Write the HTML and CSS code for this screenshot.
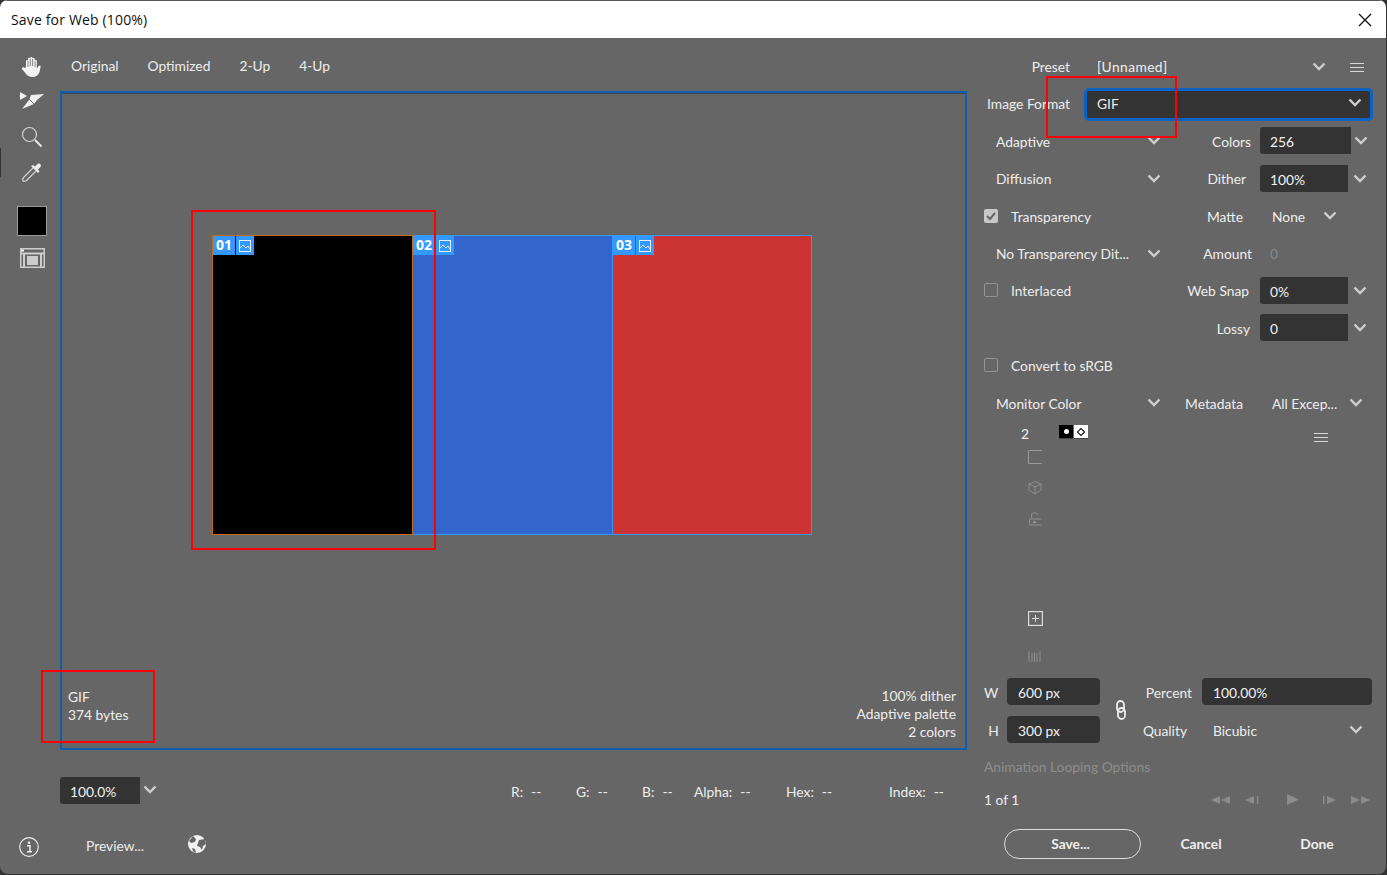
FILE: index.html
```html
<!DOCTYPE html>
<html lang="en">
<head>
<meta charset="utf-8">
<title>Save for Web (100%)</title>
<link rel="stylesheet" href="styles.css">
</head>
<body>
<svg class="defs" width="0" height="0" aria-hidden="true">
  <symbol id="chev" viewBox="0 0 14 9"><path d="M1.5 1.5 7 7l5.5-5.5" fill="none" stroke="#cfcfcf" stroke-width="2.4"/></symbol>
  <symbol id="menu" viewBox="0 0 16 11"><path d="M1 1.5h14M1 5.500h14M1 9.500h14" fill="none" stroke="#d8d8d8" stroke-width="1.2"/></symbol>
  <symbol id="pic" viewBox="0 0 12 12"><rect x=".5" y=".5" width="11" height="11" fill="none" stroke="#e8f2ff"/><path d="M1 8l3-3 3 3 2-2 2 3" fill="none" stroke="#e8f2ff"/></symbol>
</svg>
<div class="window">
  <header class="titlebar">
    <span class="title">Save for Web (100%)</span>
    <svg class="close" width="14" height="14" viewBox="0 0 14 14"><path d="M1 1l12 12M13 1 1 13" stroke="#111" stroke-width="1.3"/></svg>
  </header>
  <div class="content">
    <section class="left-pane">
      <div class="workspace">
        <nav class="tools">
          <div class="tool">
            <svg class="hand" width="24" height="24" viewBox="0 0 24 24"><path d="M6 12.500V6.200c0-1.600 2-1.600 2 0V4c0-1.700 2.200-1.700 2.300 0v-.8c0-1.600 2.300-1.600 2.300 0v1.100c0-1.600 2.200-1.600 2.200 0V6c0-1.500 2.100-1.500 2.100 0l-.2 7.500 2-2.400c1-1.200 2.700-.2 1.800 1.200L19.500 17c-1.400 3.300-3.400 5-7 5-3.500 0-5.200-1.300-6.800-3.500L2.300 14.400c-1-1.400.7-2.700 2-1.700Z" fill="#f4f4f4"/><path d="M8 6v6M10.300 4v7M12.600 4v7M15 6v6" stroke="#666" stroke-width=".8"/></svg>
          </div>
          <div class="tool">
            <svg width="24" height="20" viewBox="0 0 24 20"><path d="M0 1v8l7-4Z" fill="#f0f0f0"/><path d="M24 3 11 4l-2 5-7 9 12-5 3-4Z" fill="#f0f0f0"/><path d="M9 8l5 5" stroke="#666"/></svg>
          </div>
          <div class="tool">
            <svg width="22" height="22" viewBox="0 0 22 22"><circle cx="8.500" cy="8.500" r="7" fill="none" stroke="#d4d4d4" stroke-width="1.200"/><path d="M14 14l6.500 6.500" stroke="#e8e8e8" stroke-width="2"/></svg>
          </div>
          <div class="tool">
            <svg width="22" height="22" viewBox="0 0 22 22"><path d="M12 7 3 16c-1 1-1.500 3-1 4s3 0 4-1l9-9" fill="none" stroke="#cfcfcf" stroke-width="1.300"/><path d="M10 5l7 7 1.500-1.500-1.500-2 2.500-2.500c1.500-2-1-4.500-3-3l-2.500 2.500-2-1.500Z" fill="#ececec"/></svg>
          </div>
          <div class="swatch"></div>
          <div class="slices-toggle">
            <svg width="25" height="20" viewBox="0 0 25 20"><path d="M.75.750h23.500v18.500H.750Z" fill="none" stroke="#cdcdcd" stroke-width="1.500"/><path d="M1 5.500h23" stroke="#cdcdcd" stroke-width="2"/><path d="M4 6v13M21 6v13" stroke="#cdcdcd" stroke-width="2"/><path d="M7 8h11v9H7Z" fill="#cdcdcd"/><path d="M1 2.500h3" stroke="#f2f2f2" stroke-width="2"/></svg>
          </div>
        </nav>
        <main class="center">
          <div class="tabs">
            <span class="tab">Original</span>
            <span class="tab">Optimized</span>
            <span class="tab">2-Up</span>
            <span class="tab">4-Up</span>
          </div>
          <div class="canvas">
            <div class="image">
              <div class="slice s-black"><div class="tags"><b class="tag-num">01</b><span class="tag-ico"><svg width="12" height="12"><use href="#pic"/></svg></span></div></div>
              <div class="slice s-blue"><div class="tags"><b class="tag-num">02</b><span class="tag-ico"><svg width="12" height="12"><use href="#pic"/></svg></span></div></div>
              <div class="slice s-red"><div class="tags"><b class="tag-num">03</b><span class="tag-ico"><svg width="12" height="12"><use href="#pic"/></svg></span></div></div>
            </div>
            <div class="canvas-info">
              <div class="info-left">GIF<br>374 bytes</div>
              <div class="info-right">100% dither<br>Adaptive palette<br>2 colors</div>
            </div>
          </div>
        </main>
      </div>
      <div class="statusbar">
        <div class="field zoom-field">100.0%</div>
        <svg class="chev zoom-chev"><use href="#chev"/></svg>
        <div class="readouts">
          <span class="rd"><span>R:</span><span>--</span></span>
          <span class="rd"><span>G:</span><span>--</span></span>
          <span class="rd"><span>B:</span><span>--</span></span>
          <span class="rd"><span>Alpha:</span><span>--</span></span>
          <span class="rd"><span>Hex:</span><span>--</span></span>
          <span class="rd"><span>Index:</span><span>--</span></span>
        </div>
      </div>
      <footer class="foot-left">
        <svg class="info-ico" width="20" height="20" viewBox="0 0 20 20"><circle cx="10" cy="10" r="9.300" fill="none" stroke="#eee" stroke-width="1.200"/><circle cx="10" cy="5.700" r="1.300" fill="#eee"/><path d="M8 8.700h3v6M8 14.800h5" fill="none" stroke="#eee" stroke-width="1.500"/></svg>
        <span class="preview">Preview...</span>
        <svg class="globe" width="18" height="18" viewBox="0 0 18 18"><circle cx="9" cy="9" r="9" fill="#f2f2f2"/><path d="M5 1 8 4 7 7 3 8 1 6ZM11 5l6-1 1 5-3 2-1 4-2-3-3-1 1-3ZM4 13l3 1 1 4-3-2Z" fill="#666"/></svg>
      </footer>
    </section>

    <aside class="panel">
      <div class="row preset-row">
        <span class="cap">Preset</span>
        <span class="preset-val">[Unnamed]</span>
        <svg class="chev preset-chev"><use href="#chev"/></svg>
        <svg class="menu-ico"><use href="#menu"/></svg>
      </div>
      <div class="row format-row">
        <span class="cap">Image Format</span>
        <div class="format-select"><span>GIF</span><svg class="chev"><use href="#chev"/></svg></div>
      </div>
      <div class="row set">
        <div class="sel"><span>Adaptive</span><svg class="chev"><use href="#chev"/></svg></div>
        <span class="lbl">Colors</span>
        <div class="field f-wide">256</div><svg class="chev"><use href="#chev"/></svg>
      </div>
      <div class="row set">
        <div class="sel"><span>Diffusion</span><svg class="chev"><use href="#chev"/></svg></div>
        <span class="lbl e5">Dither</span>
        <div class="field">100%</div><svg class="chev"><use href="#chev"/></svg>
      </div>
      <div class="row set">
        <label class="chk"><span class="box on"><svg width="14" height="14" viewBox="0 0 14 14"><path d="M3 7l3 3 5-6" fill="none" stroke="#666" stroke-width="2"/></svg></span>Transparency</label>
        <span class="lbl e8">Matte</span>
        <div class="plain matte">None</div><svg class="chev"><use href="#chev"/></svg>
      </div>
      <div class="row set">
        <div class="sel"><span>No Transparency Dit...</span><svg class="chev"><use href="#chev"/></svg></div>
        <span class="lbl en1">Amount</span>
        <div class="plain dim">0</div>
      </div>
      <div class="row set">
        <label class="chk"><span class="box"></span>Interlaced</label>
        <span class="lbl e2">Web Snap</span>
        <div class="field">0%</div><svg class="chev"><use href="#chev"/></svg>
      </div>
      <div class="row set">
        <div class="sel empty"></div>
        <span class="lbl e1">Lossy</span>
        <div class="field">0</div><svg class="chev"><use href="#chev"/></svg>
      </div>
      <div class="row set">
        <label class="chk"><span class="box"></span>Convert to sRGB</label>
      </div>
      <div class="row set">
        <div class="sel"><span>Monitor Color</span><svg class="chev"><use href="#chev"/></svg></div>
        <span class="lbl e8">Metadata</span>
        <div class="plain meta">All Excep...</div><svg class="chev"><use href="#chev"/></svg>
      </div>

      <div class="palette">
        <div class="palette-head">
          <span class="count">2</span>
          <span class="chip c-black"><i></i></span><span class="chip c-white"><i></i></span>
          <svg class="menu-ico pal-menu"><use href="#menu"/></svg>
        </div>
        <div class="pal-tools">
          <svg width="14" height="14" viewBox="0 0 14 14"><path d="M14 .5H.5v13H14" fill="none" stroke="#999"/></svg>
          <svg width="14" height="14" viewBox="0 0 14 14"><path d="M7 .5 13 3v6l-6 4-6-4V3ZM1 3l6 3 6-3M7 6v7" fill="none" stroke="#8f8f8f"/></svg>
          <svg width="14" height="14" viewBox="0 0 14 14"><path d="M1.500 7h12M1.500 7v6h12M3.500 6V3c0-3 6-3 6 0" fill="none" stroke="#8f8f8f"/><path d="M6.500 8.500 8.500 11h-4Z" fill="#9a9a9a"/></svg>
          <svg class="pal-add" width="15" height="15" viewBox="0 0 15 15"><rect x=".6" y=".6" width="13.800" height="13.800" fill="none" stroke="#ddd" stroke-width="1.200"/><path d="M4 7.500h7M7.500 4v7" stroke="#ddd"/></svg>
          <svg class="pal-del" width="13" height="13" viewBox="0 0 13 13"><path d="M1 1v11M12 1v11M4 3v9M6.500 2v10M9 3v9" stroke="#8f8f8f"/></svg>
        </div>
      </div>

      <div class="size-grid">
        <span class="s-lbl w">W</span><div class="field s-field">600 px</div>
        <svg class="link" width="10" height="20" viewBox="0 0 10 20"><rect x="1" y="1" width="7" height="11" rx="3.500" fill="none" stroke="#eee" stroke-width="1.800"/><rect x="2" y="8" width="7" height="11" rx="3.500" fill="none" stroke="#eee" stroke-width="1.800"/></svg>
        <span class="s-cap">Percent</span><div class="field pct">100.00%</div>
        <span class="s-lbl h">H</span><div class="field s-field">300 px</div>
        <span class="s-cap q">Quality</span>
        <div class="quality"><span>Bicubic</span><svg class="chev"><use href="#chev"/></svg></div>
      </div>
      <div class="anim-title">Animation Looping Options</div>
      <div class="anim-row">
        <span>1 of 1</span>
        <div class="player">
          <svg width="20" height="8" viewBox="0 0 20 8"><path d="M9 0v8L0 4ZM19 0v8l-9-4Z" fill="#8c8c8c"/></svg>
          <svg width="14" height="8" viewBox="0 0 14 8"><path d="M9 0v8L0 4Z" fill="#8c8c8c"/><path d="M12 0h1.500v8H12Z" fill="#8c8c8c"/></svg>
          <svg class="pl-play" width="12" height="11" viewBox="0 0 12 11"><path d="M0 0v11l12-5.500Z" fill="#8c8c8c"/></svg>
          <svg width="14" height="8" viewBox="0 0 14 8"><path d="M0 0h1.500v8H0ZM4 0v8l9-4Z" fill="#8c8c8c"/></svg>
          <svg width="20" height="8" viewBox="0 0 20 8"><path d="M0 0v8l9-4ZM10 0v8l9-4Z" fill="#8c8c8c"/></svg>
        </div>
      </div>
      <div class="actions">
        <button class="btn save">Save...</button>
        <button class="btn cancel">Cancel</button>
        <button class="btn done">Done</button>
      </div>
    </aside>
  </div>
  <div class="mark m-format"></div>
  <div class="mark m-slice"></div>
  <div class="mark m-info"></div>
</div>
</body>
</html>
```

FILE: styles.css
```css
* { box-sizing: border-box; }
html, body { margin: 0; height: 100%; background: #333; overflow: hidden; }
body { font: 13.8px/18px Lato, "Noto Sans", sans-serif; color: #eee; }
.defs { position: absolute; }
svg { display: block; flex: none; }
.chev { width: 14px; height: 9px; margin-top: -2px; }
.menu-ico { width: 16px; height: 11px; }

.window { position: relative; width: 1387px; height: 874px; background: #666; display: flex; flex-direction: column; border-radius: 8px; overflow: hidden; border-right: 1px solid #333; }
.titlebar { height: 38px; flex: none; background: #fff; display: flex; align-items: center; justify-content: space-between; padding: 0 14px 0 11px; border-top: 1px solid #555; }
.title { font: 14px/18px "Open Sans", sans-serif; color: #111; letter-spacing: .16px; }
.content { flex: 1; display: flex; min-height: 0; }

.left-pane { width: 970px; flex: none; display: flex; flex-direction: column; }
.workspace { display: flex; }
.tools { width: 60px; flex: none; display: flex; flex-direction: column; align-items: center; padding: 10px 0 0 4px; position: relative; }
.tools::after { content: ""; position: absolute; left: 0; top: 110px; width: 1px; height: 29px; background: #333; }
.tool { height: 35.500px; width: 100%; display: flex; align-items: center; justify-content: center; }
.hand { margin-top: 2px; }
.swatch { width: 30px; height: 30px; background: #000; border: 1px solid #9a9a9a; margin-top: 16px; }
.slices-toggle { margin-top: 12px; }

.center { width: 907px; }
.tabs { height: 53px; display: flex; align-items: center; padding: 3px 0 0 11px; gap: 29px; }
.tab { white-space: nowrap; }
.canvas { height: 659px; border: 2px solid #0f5fb0; box-shadow: inset 0 1px #4a4a4a; display: flex; flex-direction: column; padding: 142px 9px 7px 6px; }
.image { display: flex; height: 300px; margin-left: 144px; }
.slice { height: 300px; border: 1px solid #39f; }
.tags { display: flex; gap: 1px; height: 19px; }
.tag-num { width: 22px; background: #39f; color: #fff; font: 700 14px/18px "Open Sans", sans-serif; text-align: center; }
.tag-ico { width: 18px; background: #39f; display: flex; align-items: center; justify-content: center; }
.s-black { width: 201px; background: #000; border-color: #c46a12; }
.s-blue { width: 199px; background: #36c; border-left: 0; border-right: 0; }
.s-red { width: 200px; background: #c33; }
.canvas-info { margin-top: auto; display: flex; justify-content: space-between; align-items: flex-end; }
.info-left { margin-bottom: 17px; }
.info-right { text-align: right; }

.statusbar { display: flex; align-items: center; height: 27px; margin-top: 27px; padding-left: 60px; }
.field { background: #333; height: 27px; width: 88px; border-radius: 3px 0 0 3px; padding: 6px 0 0 10px; flex: none; color: #f2f2f2; }
.zoom-field { width: 80px; }
.zoom-chev { margin-left: 3px; }
.readouts { display: grid; grid-template-columns: 65px 66px 52px 92px 103px auto; margin-left: 354px; padding-top: 3px; }
.rd { display: flex; gap: 8px; white-space: nowrap; }
.foot-left { display: flex; align-items: center; padding: 0 0 0 19px; margin-top: 27px; height: 30px; }
.info-ico { margin-top: 2px; }
.preview { margin-left: 47px; }
.globe { margin: -5px 0 0 44px; }

.panel { width: 416px; flex: none; padding: 10.400px 0 0 14px; display: flex; flex-direction: column; }
.row { height: 37.400px; flex: none; display: flex; align-items: center; white-space: nowrap; }
.preset-row .cap, .format-row .cap { width: 86px; text-align: right; }
.preset-val { margin-left: 27px; width: 215px; letter-spacing: .4px; }
.preset-chev { margin-right: 23px; }
.format-select { margin-left: 14px; width: 289px; height: 33px; background: #333; border: 3px solid #0a62c2; border-radius: 5px; display: flex; align-items: center; justify-content: space-between; padding: 0 8px 0 10px; }
.format-select .chev { margin-top: -4px; }
.sel { width: 180px; padding: 0 3px 0 12px; display: flex; align-items: center; justify-content: space-between; flex: none; }
.lbl { width: 87px; flex: none; text-align: right; margin-right: 9px; }
.lbl.e5 { width: 82px; margin-right: 14px; }
.lbl.e8 { width: 79px; margin-right: 17px; }
.lbl.e2 { width: 85px; margin-right: 11px; }
.lbl.e1 { width: 86px; margin-right: 10px; }
.lbl.en1 { width: 88px; margin-right: 8px; }
.set .field { margin-top: -2px; }
.set .field + .chev { margin-left: 5px; }
.set .f-wide { width: 91px; }
.set .f-wide + .chev { margin-left: 3px; }
.plain { padding-left: 12px; flex: none; }
.matte { width: 63px; }
.meta { width: 89px; }
.dim { color: #8a8a8a; padding-left: 10px; }
.chk { width: 180px; flex: none; display: flex; align-items: center; gap: 13px; }
.box { width: 14px; height: 14px; border: 1px solid #949494; border-radius: 2px; flex: none; margin-top: -2px; }
.box.on { background: #c8c8c8; border: 0; }

.palette { height: 255.600px; flex: none; padding-top: 1px; }
.palette-head { display: flex; align-items: flex-start; height: 20px; padding: 0 0 0 37px; }
.count { width: 38px; padding-top: 2px; }
.chip { width: 14px; height: 14px; margin-right: 1px; display: flex; align-items: center; justify-content: center; border-bottom: 1px solid #444; margin-top: 2px; }
.chip i { width: 5px; height: 5px; border-radius: 50%; }
.c-black { background: #000; }
.c-black i { background: #fff; }
.c-white { background: #fff; }
.c-white i { border: 1px solid #000; width: 6px; height: 6px; transform: rotate(45deg); border-radius: 0; }
.pal-menu { margin: 9px 0 0 224px; }
.pal-tools { display: flex; flex-direction: column; align-items: flex-start; padding: 7px 0 0 44px; gap: 17px; }
.pal-add { margin-top: 68px; }
.pal-del { margin-top: 7px; }

.size-grid { display: grid; grid-template-columns: 23px 93px 42px 60px 170px; grid-template-rows: 27px 27px; row-gap: 11px; align-items: center; }
.s-lbl { text-align: center; padding-top: 3px; }
.s-lbl.w { padding-right: 10px; }
.s-lbl.h { padding-right: 4px; }
.set-field { width: 93px; }
.s-field { width: 93px; border-radius: 4px; padding-left: 11px; }
.link { grid-row: 1 / span 2; grid-column: 3; justify-self: center; }
.s-cap { justify-self: end; margin-right: 10px; grid-column: 4; white-space: nowrap; padding-top: 3px; }
.s-cap.q { margin-right: 15px; }
.pct { width: 170px; border-radius: 4px; padding-left: 11px; }
.quality { grid-column: 5; display: flex; justify-content: space-between; align-items: center; padding: 3px 9px 0 11px; }

.anim-title { margin-top: 15px; color: #8e8e8e; white-space: nowrap; }
.anim-row { display: flex; justify-content: space-between; align-items: center; margin-top: 15px; padding-right: 15px; }
.player { display: flex; align-items: center; gap: 14px; }
.pl-play { margin: 0 10px 0 14px; }
.actions { display: flex; align-items: center; margin-top: 20px; padding-left: 20px; }
.btn { font: 700 13.8px/18px Lato, sans-serif; color: #eee; background: none; border: 0; padding: 0; white-space: nowrap; }
.save { width: 137px; height: 30px; border: 1px solid #ddd; border-radius: 15px; padding-right: 4px; }
.cancel { width: 120px; }
.done { width: 112px; }

.mark { position: absolute; border: 2px solid #f00; pointer-events: none; }
.m-format { left: 1046px; top: 76px; width: 131px; height: 62px; }
.m-slice { left: 191px; top: 210px; width: 245px; height: 340px; }
.m-info { left: 41px; top: 670px; width: 114px; height: 73px; }
```
